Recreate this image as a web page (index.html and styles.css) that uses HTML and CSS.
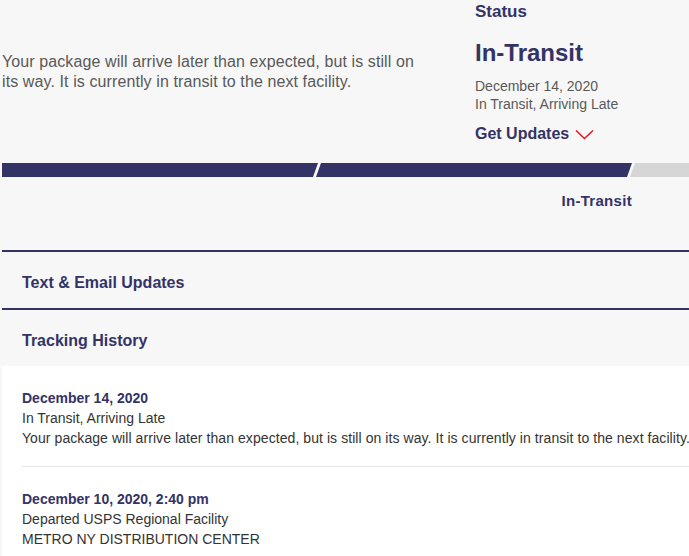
FILE: index.html
```html
<!DOCTYPE html>
<html lang="en">
<head>
    <meta charset="UTF-8">
    <meta name="viewport" content="width=device-width, initial-scale=1.0">
    <title>Tracking - In-Transit</title>
    <link rel="stylesheet" href="styles.css">
</head>
<body>
    <div class="page">
        <section class="summary">
            <p class="summary-text">Your package will arrive later than expected, but is still on its way. It is currently in transit to the next facility.</p>
            <div class="status">
                <h3 class="status-label">Status</h3>
                <h2 class="status-title">In-Transit</h2>
                <p class="status-line">December 14, 2020</p>
                <p class="status-line">In Transit, Arriving Late</p>
                <a class="get-updates" href="#">
                    Get Updates
                    <svg width="19" height="11" viewBox="0 0 19 11" aria-hidden="true">
                        <path d="M1 1.5 L9.5 9.5 L18 1.5" fill="none" stroke="#e71921" stroke-width="1.6"/>
                    </svg>
                </a>
            </div>
        </section>

        <div class="progress">
            <div class="progress-seg done first"></div>
            <div class="progress-seg done"></div>
            <div class="progress-seg"></div>
        </div>
        <div class="progress-labels">
            <span></span>
            <span class="progress-label">In-Transit</span>
            <span></span>
        </div>

        <div class="panel-row">Text &amp; Email Updates</div>
        <div class="panel-row">Tracking History</div>

        <div class="history">
            <div class="history-item">
                <p class="history-date">December 14, 2020</p>
                <p>In Transit, Arriving Late</p>
                <p class="nowrap">Your package will arrive later than expected, but is still on its way. It is currently in transit to the next facility.</p>
            </div>
            <div class="history-item">
                <p class="history-date">December 10, 2020, 2:40 pm</p>
                <p>Departed USPS Regional Facility</p>
                <p>METRO NY DISTRIBUTION CENTER</p>
            </div>
        </div>
    </div>
</body>
</html>
```

FILE: styles.css
```css
* {
    margin: 0;
    padding: 0;
    box-sizing: border-box;
}

body {
    font-family: 'Liberation Sans', Arial, Helvetica, sans-serif;
    background-color: #f7f7f7;
    color: #333;
    overflow: hidden;
}

.page {
    padding-left: 2px;
}

/* top summary */
.summary {
    display: grid;
    grid-template-columns: 473px 1fr;
    align-items: center;
}

.summary-text {
    max-width: 420px;
    font-size: 16px;
    line-height: 20px;
    color: #595959;
    letter-spacing: 0.1px;
}

.status {
    color: #333366;
    padding-top: 2px;
}

.status-label {
    font-size: 17px;
    line-height: 20px;
    font-weight: 700;
}

.status-title {
    font-size: 24px;
    line-height: 28px;
    font-weight: 700;
    margin-top: 17px;
}

.status-line {
    font-size: 14px;
    line-height: 18px;
    color: #595959;
}

.status-title + .status-line {
    margin-top: 10px;
}

.get-updates {
    display: inline-flex;
    align-items: center;
    gap: 6px;
    margin-top: 11px;
    font-size: 16px;
    line-height: 20px;
    font-weight: 700;
    color: #333366;
    text-decoration: none;
}

/* progress bar */
.progress {
    display: flex;
    margin-top: 19px;
    height: 14px;
}

.progress-seg {
    flex: 0 0 316px;
    margin-right: -2px;
    background-color: #d6d6d6;
    clip-path: polygon(5px 0, 100% 0, calc(100% - 5px) 100%, 0 100%);
}

.progress-seg:last-child {
    flex: 1 0 auto;
    margin-right: 0;
    clip-path: polygon(5px 0, 100% 0, 100% 100%, 0 100%);
}

.progress-seg.first {
    clip-path: polygon(0 0, 100% 0, calc(100% - 5px) 100%, 0 100%);
}

.progress-seg.done {
    background-color: #333366;
}

.progress-labels {
    display: grid;
    grid-template-columns: 316px 314px 1fr;
    margin-top: 15px;
}

.progress-label {
    text-align: right;
    font-size: 15px;
    line-height: 18px;
    font-weight: 700;
    color: #333366;
    letter-spacing: 0.3px;
}

/* accordion rows */
.panel-row {
    margin-top: 40px;
    border-top: 2px solid #333366;
    padding: 21px 20px 15px;
    font-size: 16px;
    line-height: 20px;
    font-weight: 700;
    color: #333366;
}

.panel-row + .panel-row {
    margin-top: 0;
}

/* tracking history */
.history {
    background-color: #ffffff;
    padding: 22px 0 0 20px;
    min-height: 200px;
}

.history-item {
    font-size: 14px;
    line-height: 20px;
    color: #333;
    padding-bottom: 18px;
}

.history-item + .history-item {
    border-top: 1px solid #e6e6e6;
    padding-top: 22px;
}

.history-date {
    font-weight: 700;
    color: #333366;
}

.nowrap {
    white-space: nowrap;
    letter-spacing: 0.07px;
}
```
